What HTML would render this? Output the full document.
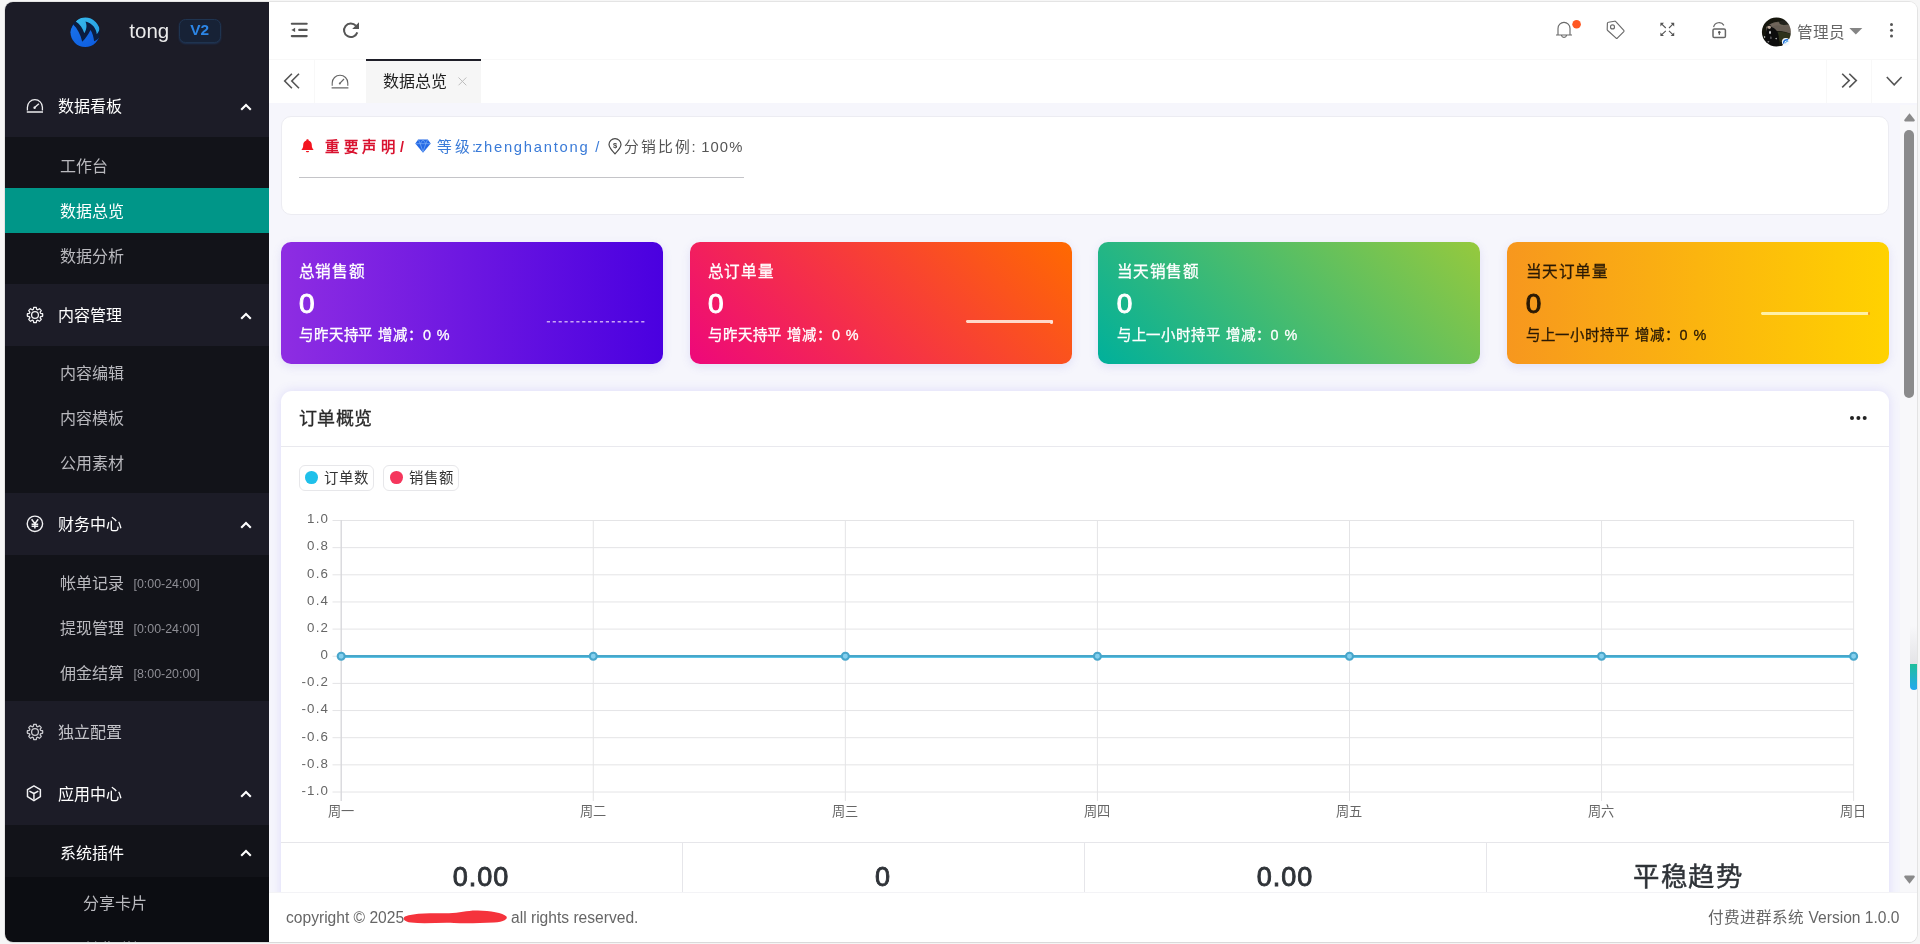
<!DOCTYPE html>
<html lang="zh-CN">
<head>
<meta charset="utf-8">
<title>数据总览</title>
<style>
*{box-sizing:border-box;margin:0;padding:0}
html,body{width:1920px;height:944px;overflow:hidden;background:#f6f6f6}
body{font-family:"Liberation Sans",sans-serif;position:relative;color:#333}
#win{position:absolute;left:4.7px;top:2px;width:1912.5px;height:939.8px;border-radius:8px;overflow:hidden;background:#fff;box-shadow:0 0 0 1px rgba(0,0,0,.07),0 1px 1px rgba(0,0,0,.05)}
#pg{position:absolute;left:-4.7px;top:-2px;width:1920px;height:944px;will-change:transform}
.a{position:absolute}
.t{position:absolute;white-space:nowrap}
svg{position:absolute;overflow:visible}
/* sidebar */
#side{left:4px;top:2px;width:265px;height:941px;background:#1c1c27}
.sub{left:4px;width:265px;background:#121319}
.m1{left:58px;margin-top:.6px;font-size:16px;line-height:24px;height:24px;color:#fff}
.m2{left:60px;margin-top:.6px;font-size:16px;line-height:24px;height:24px;color:#b9b9be}
.tm{left:133.5px;font-size:12.4px;line-height:16px;height:16px;margin-top:.4px;color:#8e8e95}
.arr{left:240px;width:12px;height:8px}
/* header */
#hdr{left:269px;top:2px;width:1648px;height:57px;background:#fff}
#tabs{left:269px;top:59px;width:1648px;height:44px;background:#fff}
#main{left:269px;top:103px;width:1648px;height:789px;background:#f6f6fc}
#foot{left:269px;top:892px;width:1650px;height:51px;background:#fff}
.card{position:absolute;background:#fff;border-radius:10px}
.sc{position:absolute;top:241.7px;width:382px;height:122.3px;border-radius:10px;box-shadow:0 3px 10px rgba(120,110,220,.16);color:#fff}
.sc .l1{position:absolute;left:18.3px;top:19.8px;font-size:15.6px;line-height:22px;letter-spacing:.6px;white-space:nowrap;-webkit-text-stroke:.3px currentColor}
.sc .l2{position:absolute;left:18.4px;top:45.3px;font-size:28px;line-height:34px;font-weight:normal;-webkit-text-stroke:1px currentColor;white-space:nowrap}
.sc .l3{position:absolute;left:18.3px;top:83.7px;font-size:14.4px;line-height:20px;letter-spacing:.9px;white-space:nowrap;-webkit-text-stroke:.3px currentColor}
.yl{position:absolute;left:280px;width:49.2px;text-align:right;font-size:13.3px;letter-spacing:1.2px;line-height:16px;height:16px;color:#666;white-space:nowrap}
.xl{position:absolute;top:803.8px;width:60px;text-align:center;font-size:13.2px;line-height:16px;height:16px;color:#666;white-space:nowrap}
.bn{position:absolute;top:860px;width:402px;text-align:center;font-size:27px;line-height:34px;height:34px;color:#2f3338;white-space:nowrap;font-weight:normal;-webkit-text-stroke:.9px #2f3338;letter-spacing:1px}
</style>
</head>
<body>
<div id="win"><div id="pg">

<aside>
<div id="side" class="a"></div>
<div class="a sub" style="top:137px;height:146.5px"></div>
<div class="a sub" style="top:346px;height:146.5px"></div>
<div class="a sub" style="top:555px;height:146px"></div>
<div class="a sub" style="top:825px;height:51.5px"></div>
<div class="a sub" style="top:876.5px;height:67px;background:#0c0d12"></div>
<div class="a" style="left:4px;top:188px;width:265px;height:45px;background:#009688"></div>

<!-- logo -->
<svg style="left:70px;top:17px" width="31" height="31" viewBox="0 0 31 31">
  <defs>
    <linearGradient id="lgc" x1="0" y1="0" x2="1" y2="1"><stop offset="0" stop-color="#38b9ec"/><stop offset="1" stop-color="#259fe2"/></linearGradient>
    <linearGradient id="lgb" x1="0" y1="0" x2="1" y2="1"><stop offset="0" stop-color="#1a74ea"/><stop offset="1" stop-color="#0c5ade"/></linearGradient>
    <clipPath id="lc"><circle cx="15.2" cy="15.3" r="14.7"/></clipPath>
  </defs>
  <circle cx="15.2" cy="15.3" r="14.9" fill="#0b1d40"/>
  <g clip-path="url(#lc)">
    <path d="M5.8 4.6 C10 -1.5 22 -2 28 6 C30.5 9.5 30 14 26.7 17.2 C26.8 12 22 5.6 15.5 4.4 C17.2 8 16.6 12.5 14.3 16.3 C12.8 11.5 10 7.4 5.8 4.6 Z" fill="url(#lgc)"/>
    <path d="M3.2 7.6 C7.4 11.6 10.6 17.6 12.2 24.8 C15.6 21.6 18.4 17.6 20.5 13.1 C22.6 16.4 23.6 20.2 24.1 24.3 C26.4 23.4 28.6 21.8 30.2 19.8 L31 21 L26 31 L4 31 L-1 16 Z" fill="url(#lgb)"/>
  </g>
</svg>
<div class="t" style="left:129.3px;top:19.3px;font-size:20.5px;line-height:24px;color:#ececec">tong</div>
<div class="a" style="left:178.5px;top:19px;width:42.5px;height:24px;border-radius:6.5px;background:#172236;border:1px solid #1f3450;box-shadow:0 1px 2px rgba(40,120,220,.25)"></div>
<div class="t" style="left:178.5px;top:18.4px;width:42.5px;text-align:center;font-size:15.4px;line-height:24px;font-weight:bold;color:#2c86e6">V2</div>

<!-- level 1 items -->
<div class="t m1" style="top:94px">数据看板</div>
<div class="t m1" style="top:303px">内容管理</div>
<div class="t m1" style="top:512px">财务中心</div>
<div class="t m1" style="top:720.5px;color:#c4c4c9">独立配置</div>
<div class="t m1" style="top:782.5px">应用中心</div>

<!-- level 2 items -->
<div class="t m2" style="top:154.2px">工作台</div>
<div class="t m2" style="top:199.2px;color:#fff">数据总览</div>
<div class="t m2" style="top:244.1px">数据分析</div>
<div class="t m2" style="top:361.5px">内容编辑</div>
<div class="t m2" style="top:406.5px">内容模板</div>
<div class="t m2" style="top:451.5px">公用素材</div>
<div class="t m2" style="top:571px">帐单记录</div><div class="t tm" style="top:576px">[0:00-24:00]</div>
<div class="t m2" style="top:616px">提现管理</div><div class="t tm" style="top:621px">[0:00-24:00]</div>
<div class="t m2" style="top:661px">佣金结算</div><div class="t tm" style="top:666px">[8:00-20:00]</div>
<div class="t m2" style="top:841px;color:#fff">系统插件</div>
<div class="t m2" style="top:891px;left:83px">分享卡片</div>
<div class="t m2" style="top:937px;left:83px">付费群组</div>

<!-- arrows -->
<svg class="arr" style="top:103px" viewBox="0 0 12 8"><path d="M1.2 6.8 L6 2 L10.8 6.8" fill="none" stroke="#fff" stroke-width="2.1"/></svg>
<svg class="arr" style="top:311.5px" viewBox="0 0 12 8"><path d="M1.2 6.8 L6 2 L10.8 6.8" fill="none" stroke="#fff" stroke-width="2.1"/></svg>
<svg class="arr" style="top:520.5px" viewBox="0 0 12 8"><path d="M1.2 6.8 L6 2 L10.8 6.8" fill="none" stroke="#fff" stroke-width="2.1"/></svg>
<svg class="arr" style="top:789.7px" viewBox="0 0 12 8"><path d="M1.2 6.8 L6 2 L10.8 6.8" fill="none" stroke="#fff" stroke-width="2.1"/></svg>
<svg class="arr" style="top:848.9px" viewBox="0 0 12 8"><path d="M1.2 6.8 L6 2 L10.8 6.8" fill="none" stroke="#fff" stroke-width="2.1"/></svg>

<!-- icon: gauge -->
<svg style="left:26px;top:98px" width="18" height="16" viewBox="0 0 18 16"><path d="M1.4 12.5 V9.2 A7.5 7.5 0 0 1 16.4 9.2 V12.5 M0.8 14 H17" fill="none" stroke="#ededf0" stroke-width="1.3"/><path d="M12.9 5.8 L8.6 9.6" stroke="#ededf0" stroke-width="1.35" fill="none"/><circle cx="8.6" cy="9.8" r="1.2" fill="#ededf0"/></svg>
<svg style="left:26px;top:305.8px" width="18" height="18" viewBox="0 0 18 18"><path d="M7.35 3.33 L7.74 1.40 A7.70 7.70 0 0 1 10.26 1.40 L10.65 3.33 A2.2 2.2 0 0 0 11.84 3.83 L13.48 2.74 A7.70 7.70 0 0 1 15.26 4.52 L14.17 6.16 A2.2 2.2 0 0 0 14.67 7.35 L16.60 7.74 A7.70 7.70 0 0 1 16.60 10.26 L14.67 10.65 A2.2 2.2 0 0 0 14.17 11.84 L15.26 13.48 A7.70 7.70 0 0 1 13.48 15.26 L11.84 14.17 A2.2 2.2 0 0 0 10.65 14.67 L10.26 16.60 A7.70 7.70 0 0 1 7.74 16.60 L7.35 14.67 A2.2 2.2 0 0 0 6.16 14.17 L4.52 15.26 A7.70 7.70 0 0 1 2.74 13.48 L3.83 11.84 A2.2 2.2 0 0 0 3.33 10.65 L1.40 10.26 A7.70 7.70 0 0 1 1.40 7.74 L3.33 7.35 A2.2 2.2 0 0 0 3.83 6.16 L2.74 4.52 A7.70 7.70 0 0 1 4.52 2.74 L6.16 3.83 A2.2 2.2 0 0 0 7.35 3.33 Z" fill="none" stroke="#f2f2f4" stroke-width="1.3" stroke-linejoin="round"/><circle cx="9" cy="9" r="3.4" fill="none" stroke="#f2f2f4" stroke-width="1.3"/></svg>
<!-- icon: yen -->
<svg style="left:26px;top:514.5px" width="18" height="18" viewBox="0 0 18 18"><circle cx="8.9" cy="8.8" r="7.7" fill="none" stroke="#f2f2f4" stroke-width="1.4"/><path d="M5.6 4.2 L8.9 8.6 L12.2 4.2 M8.9 8.4 V13.6 M5.6 9.3 H12.2 M5.6 11.3 H12.2" fill="none" stroke="#f2f2f4" stroke-width="1.5"/></svg>
<svg style="left:26px;top:723.4px" width="18" height="18" viewBox="0 0 18 18"><path d="M7.35 3.33 L7.74 1.40 A7.70 7.70 0 0 1 10.26 1.40 L10.65 3.33 A2.2 2.2 0 0 0 11.84 3.83 L13.48 2.74 A7.70 7.70 0 0 1 15.26 4.52 L14.17 6.16 A2.2 2.2 0 0 0 14.67 7.35 L16.60 7.74 A7.70 7.70 0 0 1 16.60 10.26 L14.67 10.65 A2.2 2.2 0 0 0 14.17 11.84 L15.26 13.48 A7.70 7.70 0 0 1 13.48 15.26 L11.84 14.17 A2.2 2.2 0 0 0 10.65 14.67 L10.26 16.60 A7.70 7.70 0 0 1 7.74 16.60 L7.35 14.67 A2.2 2.2 0 0 0 6.16 14.17 L4.52 15.26 A7.70 7.70 0 0 1 2.74 13.48 L3.83 11.84 A2.2 2.2 0 0 0 3.33 10.65 L1.40 10.26 A7.70 7.70 0 0 1 1.40 7.74 L3.33 7.35 A2.2 2.2 0 0 0 3.83 6.16 L2.74 4.52 A7.70 7.70 0 0 1 4.52 2.74 L6.16 3.83 A2.2 2.2 0 0 0 7.35 3.33 Z" fill="none" stroke="#c9c9ce" stroke-width="1.3" stroke-linejoin="round"/><circle cx="9" cy="9" r="3.4" fill="none" stroke="#c9c9ce" stroke-width="1.3"/></svg>
<!-- icon: cube -->
<svg style="left:26.3px;top:784.7px" width="16.8" height="16.8" viewBox="0 0 18 18"><path d="M8.5 1 L15.4 4.9 V12.5 L8.5 16.8 L1.6 12.5 V4.9 Z M3.6 6.5 L8.5 9.1 L13.2 6.5 M8.5 9.1 V15.3" fill="none" stroke="#f2f2f4" stroke-width="1.6" stroke-linejoin="round"/></svg>


</aside>
<header>
<div id="hdr" class="a"></div>
<div id="tabs" class="a"></div>
<!-- header bottom hairline -->
<div class="a" style="left:269px;top:58.5px;width:1648px;height:1px;background:#f8f8f8"></div>
<!-- shrink icon -->
<svg style="left:290px;top:22px" width="19" height="16" viewBox="0 0 19 16"><path d="M1.8 1.7 H16.7 M9.2 7.9 H16.7 M1.8 14.1 H16.7" stroke="#555" stroke-width="2.1" stroke-linecap="round" fill="none"/><path d="M1.4 7.9 L5.1 5.7 V10.1 Z" fill="#555"/></svg>
<!-- refresh icon -->
<svg style="left:342px;top:21px" width="19" height="19" viewBox="0 0 19 19"><path d="M15.3 11.4 A6.8 6.8 0 1 1 13.9 4.7" fill="none" stroke="#555" stroke-width="2"/><path d="M17 1.2 V7.9 H10.2 Z" fill="#555"/></svg>
<!-- bell -->
<svg style="left:1555px;top:21px" width="18" height="18" viewBox="0 0 18 18"><path d="M3 14 V7.4 A6 6 0 0 1 15 7.4 V14 M1 14 H17 M6.4 14.4 A2.7 2.7 0 0 0 11.6 14.4 M8.3 1.4 H9.7" fill="none" stroke="#6a6a6a" stroke-width="1.15"/></svg>
<svg style="left:1571px;top:18px" width="12" height="12" viewBox="0 0 12 12"><circle cx="5.6" cy="6.2" r="4.3" fill="#ff5722"/></svg>
<!-- tag -->
<svg style="left:1606px;top:20px" width="20" height="20" viewBox="0 0 20 20"><path d="M2.4 2.2 L8.6 1.2 Q9.3 1.1 9.8 1.7 L17.8 10.4 Q18.3 11 17.8 11.6 L11.3 18.2 Q10.7 18.7 10.1 18.2 L1.7 10.5 Q1.2 10 1.2 9.4 L1.4 3.2 Q1.5 2.3 2.4 2.2 Z" fill="none" stroke="#6a6a6a" stroke-width="1.15" stroke-linejoin="round"/><circle cx="6.5" cy="6.9" r="2" fill="none" stroke="#6a6a6a" stroke-width="1.15"/></svg>
<!-- fullscreen -->
<svg style="left:1660px;top:22px" width="15" height="15" viewBox="0 0 15 15"><path d="M1.2 1.6 L5.8 6 M13.4 1.6 L9 6 M1.2 13.2 L5.8 8.8 M13.4 13.2 L9 8.8" stroke="#555" stroke-width="1.1" fill="none"/><path d="M.4 .8 H4 L.4 4.4 Z M14.2 .8 H10.6 L14.2 4.4 Z M.4 14 H4 L.4 10.4 Z M14.2 14 H10.6 L14.2 10.4 Z" fill="#555"/></svg>
<!-- lock -->
<svg style="left:1711px;top:21px" width="16" height="18" viewBox="0 0 16 18"><rect x="2" y="7.9" width="12.4" height="8.7" rx="1.4" fill="none" stroke="#666" stroke-width="1.5"/><path d="M2.6 6.2 A5.6 5.6 0 0 1 12.9 4.4" fill="none" stroke="#666" stroke-width="1.2"/><circle cx="8.3" cy="11.3" r="1.2" fill="#555"/><path d="M8.3 11.3 V13.9" stroke="#555" stroke-width="1.1"/></svg>
<!-- avatar -->
<svg style="left:1761px;top:16.5px" width="31" height="31" viewBox="0 0 31 31">
  <defs><clipPath id="avc"><circle cx="15.4" cy="14.9" r="14.5"/></clipPath>
  <filter id="avb" x="-10%" y="-10%" width="120%" height="120%"><feGaussianBlur stdDeviation=".55"/></filter></defs>
  <g clip-path="url(#avc)"><g filter="url(#avb)">
    <rect x="-2" y="-2" width="35" height="35" fill="#14150f"/>
    <path d="M5 10 C8 7.4 12 5.2 17 4.8 C23 4.6 28 8 32 10.5 L32 17.5 C27 15.5 22 14.2 17 14 C13 13.8 9 14.6 6 16 Z" fill="#665d52"/>
    <path d="M9 7.5 C13 5.6 18 5.4 22 6.6 L22 9 C18 8 13 8.4 9 10 Z" fill="#756b60" opacity=".6"/>
    <ellipse cx="23.2" cy="5.6" rx="5" ry="2.3" fill="#20241a"/>
    <path d="M15 15 C20 14.2 26 15.4 32 17.6 L32 25 L19 25 Z" fill="#2e321e"/>
    <path d="M4.5 31 C4 22 5 15 6.4 11.4 C7 9.4 9.6 8.6 11 10.2 C14.5 11.6 17.2 14.4 17.6 19 C18 23 17.6 27 17.6 31 Z" fill="#0a0a0b"/>
    <ellipse cx="8.3" cy="10.2" rx="1.5" ry="1.7" fill="#bfab9c"/>
    <path d="M6.6 9 C7.4 7.4 9.6 7.4 10.2 8.8 C9.2 8.6 7.8 8.6 6.6 9 Z" fill="#0a0a0b"/>
    <ellipse cx="9" cy="15.4" rx=".9" ry="1.6" fill="#dcdcdc"/>
    <ellipse cx="9.9" cy="20.8" rx=".8" ry="1.5" fill="#5d5d60"/>
    <ellipse cx="3.6" cy="20" rx=".7" ry="1" fill="#b8b8b8"/>
    <ellipse cx="7.4" cy="24.7" rx="1" ry=".8" fill="#8e8e8e"/>
    <ellipse cx="15.2" cy="21.6" rx=".9" ry=".8" fill="#a8a8a8"/>
  </g></g>
  <circle cx="24.8" cy="24.8" r="3.9" fill="#f4f8fc"/><path d="M22.6 26.6 C22.4 23.8 24.4 22.2 27.2 22.8" stroke="#1f6fd6" stroke-width="1.5" fill="none"/><path d="M24.6 26.2 C24.8 24.6 25.8 24 27.2 24.4" stroke="#3aa0e8" stroke-width="1" fill="none"/>
</svg>
<div class="t" style="left:1797px;top:20.6px;font-size:15.6px;line-height:24px;color:#666">管理员</div>
<svg style="left:1848.5px;top:28px" width="14" height="7" viewBox="0 0 14 7"><path d="M.3 0 H13.3 L6.8 6.6 Z" fill="#858585"/></svg>
<div class="a" style="left:1889.5px;top:22.7px;width:3.2px;height:3.2px;border-radius:50%;background:#555;box-shadow:0 5.8px 0 #555,0 11.5px 0 #555"></div>

<!-- tab bar -->
<div class="a" style="left:366.4px;top:59px;width:114.2px;height:44px;background:#f6f6f6"></div>
<div class="a" style="left:366.4px;top:59px;width:114.2px;height:2px;background:#1e1e28"></div>
<div class="a" style="left:314px;top:59px;width:1px;height:44px;background:#f8f8f8"></div>
<div class="a" style="left:1826px;top:59px;width:1px;height:44px;background:#f8f8f8"></div>
<div class="a" style="left:1871px;top:59px;width:1px;height:44px;background:#f8f8f8"></div>
<svg style="left:283px;top:73px" width="18" height="16" viewBox="0 0 18 16"><path d="M8.9 .8 L1.7 8 L8.9 15.2 M16 .8 L8.8 8 L16 15.2" fill="none" stroke="#555" stroke-width="1.6"/></svg>
<svg style="left:331px;top:73.5px" width="18" height="15" viewBox="0 0 18 15"><path d="M1.2 11.8 V9 A7.8 7.8 0 0 1 16.8 9 V11.8 M.6 13.9 H17.4" fill="none" stroke="#666" stroke-width="1.1"/><path d="M13 5 L8.8 9.3" stroke="#666" stroke-width="1.2" fill="none"/><circle cx="8.8" cy="9.4" r="1" fill="#666"/></svg>
<div class="t" style="left:383px;top:69.7px;font-size:16px;line-height:24px;color:#1d1d1d">数据总览</div>
<svg style="left:458px;top:77px" width="9" height="9" viewBox="0 0 9 9"><path d="M.5 .5 L8.3 8.3 M8.3 .5 L.5 8.3" stroke="#bdbdbd" stroke-width="1" fill="none"/></svg>
<svg style="left:1840.6px;top:73.2px" width="17" height="16" viewBox="0 0 17 16"><path d="M1.2 .8 L8.2 7.6 L1.2 14.4 M8.3 .8 L15.3 7.6 L8.3 14.4" fill="none" stroke="#555" stroke-width="1.6"/></svg>
<svg style="left:1885.8px;top:75.8px" width="17" height="11" viewBox="0 0 17 11"><path d="M.8 1 L8.2 8.8 L15.6 1" fill="none" stroke="#555" stroke-width="1.6"/></svg>
<!-- tab bar bottom shadow -->
<div class="a" style="left:269px;top:102.5px;width:1648px;height:3px;background:linear-gradient(#ecedf4,#f6f6fc)"></div>


</header>
<main>
<div id="main" class="a"></div>
<!-- notice card -->
<div class="card" style="left:280.5px;top:115.5px;width:1608px;height:99px;border:1px solid #ececf2"></div>
<svg style="left:300.5px;top:139px" width="13" height="14" viewBox="0 0 13 14"><path d="M6.5 .2 C7.3 .2 7.7 .8 7.7 1.4 C9.8 2 10.8 3.8 10.8 6 C10.8 8.6 11.4 9.6 12.4 10.4 V11.1 H.6 V10.4 C1.6 9.6 2.2 8.6 2.2 6 C2.2 3.8 3.2 2 5.3 1.4 C5.3 .8 5.7 .2 6.5 .2 Z M4.9 11.9 H8.1 C8.1 12.7 7.4 13.2 6.5 13.2 C5.6 13.2 4.9 12.7 4.9 11.9 Z" fill="#f3141f"/></svg>
<div class="t" style="left:324.8px;top:134.6px;font-size:14.4px;line-height:24px;font-weight:bold;letter-spacing:4.8px;color:#d9122f">重要声明/</div>
<svg style="left:414.5px;top:139px" width="16" height="14" viewBox="0 0 16 14"><path d="M3.2 .4 H12.8 L15.7 4.6 L8 13.7 L.3 4.6 Z" fill="#2469e6"/><path d="M.6 4.7 H15.4 M5.2 4.7 L8 12.8 L10.8 4.7 M3.4 .6 L5.2 4.7 L8 .6 L10.8 4.7 L12.6 .6" fill="none" stroke="#7fb0f7" stroke-width=".7"/></svg>
<div class="t" id="nb" style="left:437.3px;top:134.7px;font-size:14.8px;line-height:24px;letter-spacing:2.35px;color:#3a7bd8">等级:</div><div class="t" style="left:474.9px;top:134.7px;font-size:14.8px;line-height:24px;letter-spacing:1.72px;color:#3a7bd8">zhenghantong /</div>
<svg style="left:607.5px;top:138px" width="14" height="17" viewBox="0 0 14 17"><path d="M7 15.9 C3.6 12.4 1 9.6 1 6.6 A6 6 0 0 1 13 6.6 C13 9.6 10.4 12.4 7 15.9 Z" fill="none" stroke="#484848" stroke-width="1.2"/><text x="7" y="9.6" font-size="7.6" font-weight="bold" text-anchor="middle" fill="#484848" font-family="Liberation Sans, sans-serif">$</text></svg>
<div class="t" id="ng" style="left:624px;top:134.7px;font-size:14.8px;line-height:24px;letter-spacing:1.85px;color:#555">分销比例:</div><div class="t" style="left:701.2px;top:134.7px;font-size:14.8px;line-height:24px;letter-spacing:1.1px;color:#555">100%</div>
<div class="a" style="left:299px;top:176.7px;width:444.5px;height:1px;background:#c4c4c8"></div>
<div class="sc" style="left:280.6px;background:linear-gradient(90deg,#8e2de2,#4a00e0);color:#fff"><div class="l1">总销售额</div><div class="l2">0</div><div class="l3">与昨天持平 增减：0 %</div></div>
<div class="sc" style="left:689.6px;background:linear-gradient(45deg,#ee0979 2%,#ff6a00);color:#fff"><div class="l1">总订单量</div><div class="l2">0</div><div class="l3">与昨天持平 增减：0 %</div></div>
<div class="sc" style="left:1098.4px;background:linear-gradient(45deg,#00b09b,#96c93d);color:#fff"><div class="l1">当天销售额</div><div class="l2">0</div><div class="l3">与上一小时持平 增减：0 %</div></div>
<div class="sc" style="left:1507.4px;background:linear-gradient(90deg,#f7971e,#ffd200);color:#2a1a05"><div class="l1">当天订单量</div><div class="l2">0</div><div class="l3">与上一小时持平 增减：0 %</div></div>
<svg style="left:546px;top:318px" width="101" height="8" viewBox="0 0 101 8"><path d="M.8 3.7 H99.4" stroke="#c9a6f5" stroke-width="1.6" stroke-dasharray="3.2 2.7" fill="none"/></svg>
<div class="a" style="left:966px;top:320.3px;width:86.5px;height:2.8px;border-radius:1.4px;background:#ffd9c9"></div><div class="a" style="left:1049.5px;top:319.8px;width:3.8px;height:3.8px;border-radius:50%;background:#ffe3d6"></div>
<div class="a" style="left:1761px;top:312.2px;width:108px;height:2.8px;border-radius:1.4px;background:#fff0a6"></div><div class="a" style="left:1867.5px;top:312.3px;width:2.6px;height:2.6px;border-radius:50%;background:#f79a1c"></div>
<!-- chart card -->
<div class="card" style="left:281px;top:391px;width:1608px;height:560px;border-radius:11px 11px 0 0;box-shadow:0 0 11px rgba(100,90,230,.17)"></div>
<div class="t" style="left:298.6px;top:404.6px;font-size:18px;line-height:28px;letter-spacing:.6px;color:#2a2a2a;-webkit-text-stroke:.3px #2a2a2a">订单概览</div>
<div class="a" style="left:1849.9px;top:416.1px;width:4px;height:4px;border-radius:50%;background:#222;box-shadow:6.4px 0 0 #222,12.7px 0 0 #222"></div>
<div class="a" style="left:281px;top:445.5px;width:1608px;height:1px;background:#e9e9ee"></div>
<div class="a" style="left:299px;top:465.3px;width:75px;height:25.4px;border:1px solid #e7e7ea;border-radius:6px"></div>
<div class="a" style="left:305.2px;top:471px;width:12.8px;height:12.8px;border-radius:50%;background:#1fc0ea"></div>
<div class="t" style="left:324.4px;top:467.3px;font-size:14.4px;line-height:22px;letter-spacing:1px;color:#333">订单数</div>
<div class="a" style="left:383.4px;top:465.3px;width:75.2px;height:25.4px;border:1px solid #e7e7ea;border-radius:6px"></div>
<div class="a" style="left:389.8px;top:471px;width:12.8px;height:12.8px;border-radius:50%;background:#f5365c"></div>
<div class="t" style="left:409px;top:467.3px;font-size:14.4px;line-height:22px;letter-spacing:1px;color:#333">销售额</div>
<svg style="left:0;top:0" width="1920" height="944" viewBox="0 0 1920 944"><g stroke="#e4e4e6" stroke-width="1" fill="none"><path d="M332.5 520.50 H1853.8"/><path d="M332.5 547.65 H1853.8"/><path d="M332.5 574.80 H1853.8"/><path d="M332.5 601.95 H1853.8"/><path d="M332.5 629.10 H1853.8"/><path d="M332.5 656.25 H1853.8"/><path d="M332.5 683.40 H1853.8"/><path d="M332.5 710.55 H1853.8"/><path d="M332.5 737.70 H1853.8"/><path d="M332.5 764.85 H1853.8"/><path d="M332.5 792.00 H1853.8"/><path d="M341.20 520 V801"/><path d="M593.27 520 V801"/><path d="M845.34 520 V801"/><path d="M1097.41 520 V801"/><path d="M1349.48 520 V801"/><path d="M1601.55 520 V801"/><path d="M1853.62 520 V801"/></g><path d="M341.2 520 V801" stroke="#d4d4d8" stroke-width="1" fill="none"/><path d="M341.2 656.2 H1853.6" stroke="#48a6c9" stroke-width="2.3" fill="none"/><path d="M341.2 657.4 H1853.6" stroke="#41bbe3" stroke-width=".9" fill="none"/><circle cx="341.20" cy="656.2" r="3.5" fill="#84cfee" stroke="#48a6cb" stroke-width="2.1"/><circle cx="593.27" cy="656.2" r="3.5" fill="#84cfee" stroke="#48a6cb" stroke-width="2.1"/><circle cx="845.34" cy="656.2" r="3.5" fill="#84cfee" stroke="#48a6cb" stroke-width="2.1"/><circle cx="1097.41" cy="656.2" r="3.5" fill="#84cfee" stroke="#48a6cb" stroke-width="2.1"/><circle cx="1349.48" cy="656.2" r="3.5" fill="#84cfee" stroke="#48a6cb" stroke-width="2.1"/><circle cx="1601.55" cy="656.2" r="3.5" fill="#84cfee" stroke="#48a6cb" stroke-width="2.1"/><circle cx="1853.62" cy="656.2" r="3.5" fill="#84cfee" stroke="#48a6cb" stroke-width="2.1"/></svg>
<div class="yl" style="top:511.3px">1.0</div><div class="yl" style="top:538.4px">0.8</div><div class="yl" style="top:565.6px">0.6</div><div class="yl" style="top:592.8px">0.4</div><div class="yl" style="top:619.9px">0.2</div><div class="yl" style="top:647.0px">0</div><div class="yl" style="top:674.2px">-0.2</div><div class="yl" style="top:701.3px">-0.4</div><div class="yl" style="top:728.5px">-0.6</div><div class="yl" style="top:755.6px">-0.8</div><div class="yl" style="top:782.8px">-1.0</div>
<div class="xl" style="left:310.7px">周一</div><div class="xl" style="left:562.8px">周二</div><div class="xl" style="left:814.8px">周三</div><div class="xl" style="left:1066.9px">周四</div><div class="xl" style="left:1319.0px">周五</div><div class="xl" style="left:1571.0px">周六</div><div class="xl" style="left:1823.1px">周日</div>
<div class="a" style="left:281px;top:842px;width:1608px;height:1px;background:#e6e6ea"></div>
<div class="a" style="left:682px;top:842px;width:1px;height:50px;background:#e6e6ea"></div>
<div class="a" style="left:1084px;top:842px;width:1px;height:50px;background:#e6e6ea"></div>
<div class="a" style="left:1486px;top:842px;width:1px;height:50px;background:#e6e6ea"></div>
<div class="bn" style="left:280px">0.00</div>
<div class="bn" style="left:682px">0</div>
<div class="bn" style="left:1084px">0.00</div>
<div class="bn" style="left:1487.2px;font-size:26.4px;letter-spacing:1.6px;-webkit-text-stroke:.45px #2f3338">平稳趋势</div>
<!-- scrollbar -->
<div class="a" style="left:1900px;top:105px;width:17px;height:787px;background:#f8f8fa"></div>
<svg style="left:1903.5px;top:112.5px" width="11" height="9" viewBox="0 0 11 9"><path d="M5.5 .3 L10.8 7 Q10.9 8.3 9.8 8.4 H1.2 Q.1 8.3 .2 7 Z" fill="#8a8a8a"/></svg>
<div class="a" style="left:1904px;top:129.5px;width:10px;height:268px;border-radius:5px;background:#8b8b8b"></div>
<svg style="left:1903.5px;top:875px" width="11" height="9" viewBox="0 0 11 9"><path d="M5.5 8.7 L10.8 2 Q10.9 .7 9.8 .6 H1.2 Q.1 .7 .2 2 Z" fill="#8a8a8a"/></svg>
<div class="a" style="left:1909.5px;top:625px;width:8px;height:40px;background:linear-gradient(rgba(225,225,228,0),rgba(225,225,228,.9))"></div>
<div class="a" style="left:1909.5px;top:664px;width:8px;height:25.5px;border-radius:0 0 4px 4px;background:linear-gradient(#1fbf9c,#22a8ef)"></div>


</main>
<footer>
<div id="foot" class="a"></div>
<div class="a" style="left:269px;top:891.5px;width:1648px;height:1px;background:#f3f3f6"></div>
<div class="t" style="left:286px;top:906px;font-size:15.6px;line-height:24px;color:#666">copyright © 2025</div>
<svg style="left:402px;top:908px" width="108" height="20" viewBox="0 0 108 20"><path d="M3 8.5 C12 4.5 30 5.5 47 5.2 C58 5 66 2.2 76 2.6 C88 3 101 5 104.5 8.5 C106 11 102 14 92 14.4 C78 15 66 15.6 52 15 C38 14.4 22 16 9 14.6 C2 13.8 0 10.5 3 8.5 Z" fill="#f5333c"/></svg>
<div class="t" style="left:511px;top:906px;font-size:15.6px;line-height:24px;color:#666">all rights reserved.</div>
<div class="t" style="right:20.5px;top:906px;font-size:15.6px;line-height:24px;color:#666">付费进群系统 Version 1.0.0</div>


</footer>
</div></div>
</body>
</html>
